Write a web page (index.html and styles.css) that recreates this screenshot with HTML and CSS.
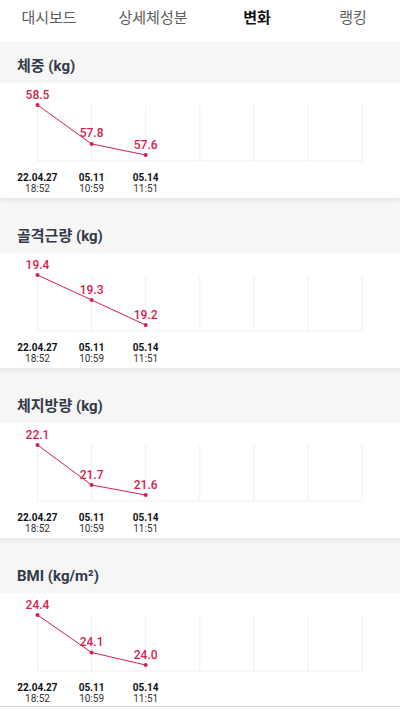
FILE: index.html
```html
<!DOCTYPE html>
<html lang="ko">
<head>
<meta charset="utf-8">
<title>변화</title>
<link rel="stylesheet" href="styles.css">
</head>
<body>
<nav class="tabs">
  <span class="tab">대시보드</span>
  <span class="tab">상세체성분</span>
  <span class="tab active">변화</span>
  <span class="tab">랭킹</span>
</nav>

<main class="list">
  <section class="section">
    <h2 class="title">체중 (kg)</h2>
    <div class="card">
      <svg class="chart" width="400" height="80" viewBox="0 0 400 80">
        <g class="grid">
          <line x1="37.5" y1="22" x2="37.5" y2="78"/><line x1="91.6" y1="22" x2="91.6" y2="78"/><line x1="145.7" y1="22" x2="145.7" y2="78"/><line x1="199.8" y1="22" x2="199.8" y2="78"/><line x1="253.9" y1="22" x2="253.9" y2="78"/><line x1="308" y1="22" x2="308" y2="78"/><line x1="362.1" y1="22" x2="362.1" y2="78"/><line x1="37.5" y1="78" x2="362.1" y2="78"/>
        </g>
        <polyline class="line" points="37.5,22 91.6,60.9 145.7,72"/>
        <g class="dots"><circle cx="37.5" cy="22" r="2"/><circle cx="91.6" cy="60.9" r="2"/><circle cx="145.7" cy="72" r="2"/></g>
        <g class="vals"><text x="37.5" y="15.5">58.5</text><text x="91.6" y="54.4">57.8</text><text x="145.7" y="65.5">57.6</text></g>
      </svg>
      <div class="dates">
        <div class="date"><b>22.04.27</b><span>18:52</span></div>
        <div class="date"><b>05.11</b><span>10:59</span></div>
        <div class="date"><b>05.14</b><span>11:51</span></div>
      </div>
    </div>
  </section>

  <section class="section">
    <h2 class="title">골격근량 (kg)</h2>
    <div class="card">
      <svg class="chart" width="400" height="80" viewBox="0 0 400 80">
        <g class="grid">
          <line x1="37.5" y1="22" x2="37.5" y2="78"/><line x1="91.6" y1="22" x2="91.6" y2="78"/><line x1="145.7" y1="22" x2="145.7" y2="78"/><line x1="199.8" y1="22" x2="199.8" y2="78"/><line x1="253.9" y1="22" x2="253.9" y2="78"/><line x1="308" y1="22" x2="308" y2="78"/><line x1="362.1" y1="22" x2="362.1" y2="78"/><line x1="37.5" y1="78" x2="362.1" y2="78"/>
        </g>
        <polyline class="line" points="37.5,22 91.6,47 145.7,72"/>
        <g class="dots"><circle cx="37.5" cy="22" r="2"/><circle cx="91.6" cy="47" r="2"/><circle cx="145.7" cy="72" r="2"/></g>
        <g class="vals"><text x="37.5" y="15.5">19.4</text><text x="91.6" y="40.5">19.3</text><text x="145.7" y="65.5">19.2</text></g>
      </svg>
      <div class="dates">
        <div class="date"><b>22.04.27</b><span>18:52</span></div>
        <div class="date"><b>05.11</b><span>10:59</span></div>
        <div class="date"><b>05.14</b><span>11:51</span></div>
      </div>
    </div>
  </section>

  <section class="section">
    <h2 class="title">체지방량 (kg)</h2>
    <div class="card">
      <svg class="chart" width="400" height="80" viewBox="0 0 400 80">
        <g class="grid">
          <line x1="37.5" y1="22" x2="37.5" y2="78"/><line x1="91.6" y1="22" x2="91.6" y2="78"/><line x1="145.7" y1="22" x2="145.7" y2="78"/><line x1="199.8" y1="22" x2="199.8" y2="78"/><line x1="253.9" y1="22" x2="253.9" y2="78"/><line x1="308" y1="22" x2="308" y2="78"/><line x1="362.1" y1="22" x2="362.1" y2="78"/><line x1="37.5" y1="78" x2="362.1" y2="78"/>
        </g>
        <polyline class="line" points="37.5,22 91.6,62 145.7,72"/>
        <g class="dots"><circle cx="37.5" cy="22" r="2"/><circle cx="91.6" cy="62" r="2"/><circle cx="145.7" cy="72" r="2"/></g>
        <g class="vals"><text x="37.5" y="15.5">22.1</text><text x="91.6" y="55.5">21.7</text><text x="145.7" y="65.5">21.6</text></g>
      </svg>
      <div class="dates">
        <div class="date"><b>22.04.27</b><span>18:52</span></div>
        <div class="date"><b>05.11</b><span>10:59</span></div>
        <div class="date"><b>05.14</b><span>11:51</span></div>
      </div>
    </div>
  </section>

  <section class="section">
    <h2 class="title">BMI (kg/m²)</h2>
    <div class="card">
      <svg class="chart" width="400" height="80" viewBox="0 0 400 80">
        <g class="grid">
          <line x1="37.5" y1="22" x2="37.5" y2="78"/><line x1="91.6" y1="22" x2="91.6" y2="78"/><line x1="145.7" y1="22" x2="145.7" y2="78"/><line x1="199.8" y1="22" x2="199.8" y2="78"/><line x1="253.9" y1="22" x2="253.9" y2="78"/><line x1="308" y1="22" x2="308" y2="78"/><line x1="362.1" y1="22" x2="362.1" y2="78"/><line x1="37.5" y1="78" x2="362.1" y2="78"/>
        </g>
        <polyline class="line" points="37.5,22 91.6,59.5 145.7,72"/>
        <g class="dots"><circle cx="37.5" cy="22" r="2"/><circle cx="91.6" cy="59.5" r="2"/><circle cx="145.7" cy="72" r="2"/></g>
        <g class="vals"><text x="37.5" y="15.5">24.4</text><text x="91.6" y="53">24.1</text><text x="145.7" y="65.5">24.0</text></g>
      </svg>
      <div class="dates">
        <div class="date"><b>22.04.27</b><span>18:52</span></div>
        <div class="date"><b>05.11</b><span>10:59</span></div>
        <div class="date"><b>05.14</b><span>11:51</span></div>
      </div>
    </div>
  </section>
</main>

<footer class="bottombar"></footer>
</body>
</html>
```
FILE: styles.css
```css
* { box-sizing: border-box; }

html, body {
  margin: 0;
  padding: 0;
}

body {
  background: #f6f6f6;
  font-family: Roboto, "Noto Sans CJK KR", sans-serif;
  width: 400px;
  overflow: hidden;
}

.tabs {
  display: grid;
  grid-template-columns: 98px 110px 98px 94px;
  height: 42px;
  background: #ffffff;
}

.tab {
  display: flex;
  justify-content: center;
  align-items: flex-start;
  padding-top: 8px;
  font-size: 15px;
  line-height: 20px;
  color: #5c5c5c;
}

.tab.active {
  color: #111111;
  font-weight: 700;
}

.list {
  display: flex;
  flex-direction: column;
}

.section {
  display: flex;
  flex-direction: column;
  margin-bottom: 14px;
}

.title {
  margin: 0;
  height: 41px;
  padding: 14px 17px 0;
  font-size: 15px;
  line-height: 20px;
  font-weight: 700;
  color: #343a48;
}

.card {
  background: #ffffff;
  height: 115px;
  box-shadow: 0 3px 4px rgba(0, 0, 0, 0.06);
}

.chart {
  display: block;
}

.grid line {
  stroke: #efefef;
  stroke-width: 1;
}

.line {
  fill: none;
  stroke: #d5214b;
  stroke-width: 1;
}

.dots circle {
  fill: #d5214b;
}

.vals text {
  fill: #d5214b;
  font-family: Roboto, sans-serif;
  font-size: 12px;
  font-weight: 500;
  text-anchor: middle;
}

.dates {
  display: grid;
  grid-template-columns: repeat(6, 54.1px);
  padding-left: 10.45px;
  margin-top: 8.5px;
}

.date {
  display: flex;
  flex-direction: column;
  align-items: center;
  font-size: 10px;
  line-height: 11px;
}

.date b {
  font-weight: 700;
  color: #111111;
}

.date span {
  color: #333333;
}

.bottombar {
  position: fixed;
  left: 0;
  right: 0;
  top: 706px;
  height: 20px;
  background: #ffffff;
  border-top: 1px solid #d4d4d4;
}
```
